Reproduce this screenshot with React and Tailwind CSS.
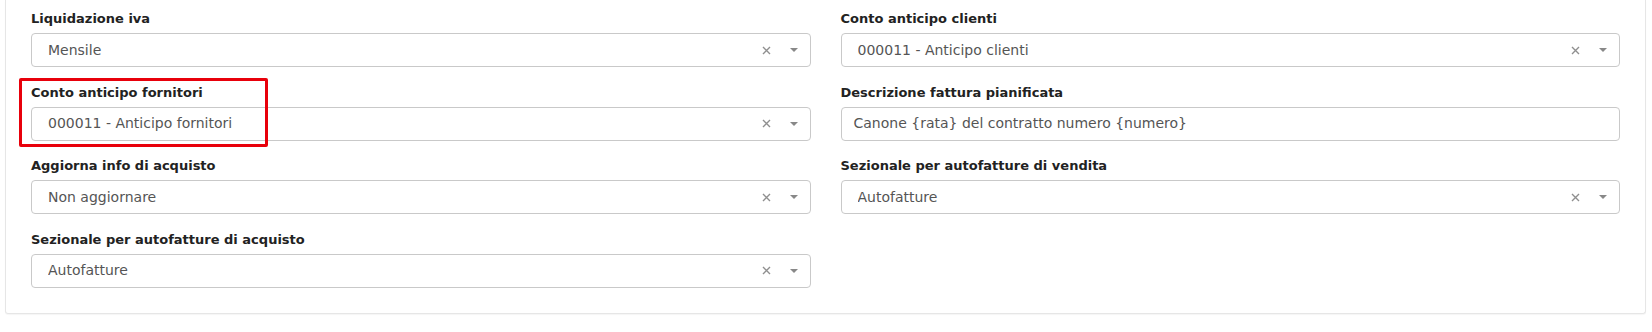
import React from 'react';

const font = { fontFamily: '"DejaVu Sans", Verdana, sans-serif' };

const SelectBox = ({ value }) => (
  <div className="flex items-center h-[34px] border border-[#c9c9c9] rounded-[4px] bg-white pl-[16px] pr-[12px]">
    <span className="flex-1 text-[14px] text-[#555] truncate">{value}</span>
    <svg width="9" height="9" viewBox="0 0 9 9" className="mr-[19px]">
      <path d="M1 1L8 8M8 1L1 8" stroke="#8f8f8f" strokeWidth="1.4" />
    </svg>
    <svg width="8" height="4" viewBox="0 0 8 4">
      <path d="M0 0H8L4 4Z" fill="#888" />
    </svg>
  </div>
);

const TextBox = ({ value }) => (
  <div className="flex items-center h-[34px] border border-[#c9c9c9] rounded-[4px] bg-white px-[12px]">
    <span className="text-[14px] text-[#555]">{value}</span>
  </div>
);

const Field = ({ label, children, highlight }) => (
  <div className="relative mb-[16.67px]">
    {highlight && (
      <div className="absolute left-[-12px] top-[-6px] w-[249px] h-[69px] border-[3px] border-[#e8000b] rounded-[2px] pointer-events-none" />
    )}
    <div className="text-[13px] leading-[18px] font-bold text-[#222] mb-[5px]">{label}</div>
    {children}
  </div>
);

export default function App() {
  return (
    <div className="bg-white w-[1652px] h-[332px]" style={font}>
      <div className="ml-[5px] mr-[6px] border border-t-0 border-[#e6e6e6] rounded-b-[3px] shadow-[0_1px_1px_rgba(0,0,0,0.04)] px-[25px] pt-[10px] pb-[8px]">
        <div className="grid grid-cols-2 gap-x-[30px]">
          <Field label="Liquidazione iva">
            <SelectBox value="Mensile" />
          </Field>
          <Field label="Conto anticipo clienti">
            <SelectBox value="000011 - Anticipo clienti" />
          </Field>
          <Field label="Conto anticipo fornitori" highlight>
            <SelectBox value="000011 - Anticipo fornitori" />
          </Field>
          <Field label="Descrizione fattura pianificata">
            <TextBox value="Canone {rata} del contratto numero {numero}" />
          </Field>
          <Field label="Aggiorna info di acquisto">
            <SelectBox value="Non aggiornare" />
          </Field>
          <Field label="Sezionale per autofatture di vendita">
            <SelectBox value="Autofatture" />
          </Field>
          <Field label="Sezionale per autofatture di acquisto">
            <SelectBox value="Autofatture" />
          </Field>
          <div />
        </div>
      </div>
    </div>
  );
}
